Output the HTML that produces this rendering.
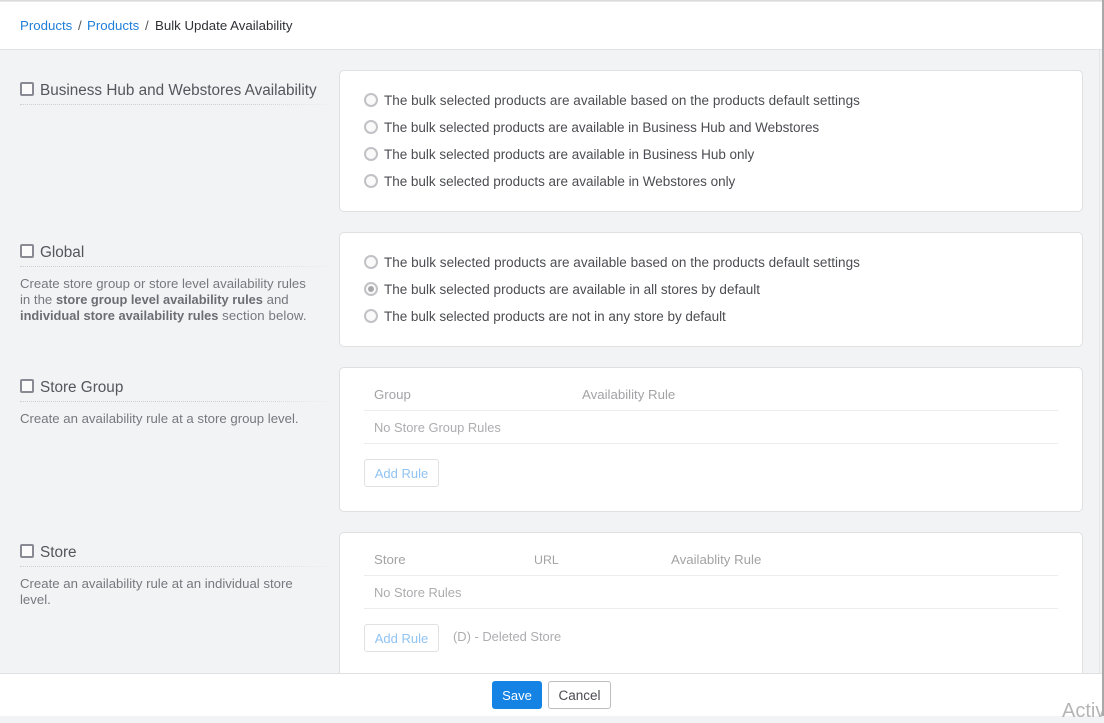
<!DOCTYPE html>
<html><head><meta charset="utf-8">
<style>
html,body{margin:0;padding:0;width:1104px;height:716px;overflow:hidden;background:#f2f3f5;font-family:"Liberation Sans",Arial,sans-serif;}
.t{position:absolute;white-space:nowrap;font-size:13.25px;line-height:18px;}
.b{position:absolute;box-sizing:border-box;}
.card{position:absolute;box-sizing:border-box;left:339px;width:744px;background:#fff;border:1px solid #dfe0e2;border-radius:5px;}
.cb{position:absolute;box-sizing:border-box;left:20px;width:14px;height:14px;border:2px solid #8a8a94;border-radius:2px;background:#fbfbfc;}
.h{position:absolute;left:40px;font-size:15.3px;line-height:20px;color:#55565c;white-space:nowrap;}
.dot{position:absolute;left:20px;width:318px;height:0;border-top:1px dotted #cfd0d3;-webkit-mask-image:linear-gradient(to right,#000 75%,transparent);mask-image:linear-gradient(to right,#000 75%,transparent);}
.d{position:absolute;left:20px;font-size:13.2px;line-height:16px;color:#77787e;white-space:nowrap;}
.d b{font-weight:bold;font-size:12.85px;color:#6c6d73;}
.r{position:absolute;box-sizing:border-box;left:364px;width:14px;height:14px;border:2px solid #c2c2c6;border-radius:50%;background:#fafafa;}
.l{position:absolute;left:384px;font-size:13.5px;letter-spacing:.03px;line-height:18px;color:#4c4d52;white-space:nowrap;}
.th{position:absolute;font-size:13.25px;line-height:18px;color:#a3a3a6;white-space:nowrap;}
.td{position:absolute;font-size:12.9px;line-height:18px;color:#adadb0;white-space:nowrap;}
.line{position:absolute;left:364px;width:694px;height:1px;background:#eceded;}
.add{position:absolute;box-sizing:border-box;left:364px;width:75px;height:28px;border:1px solid #e0e1e3;border-radius:3px;background:#fff;color:#90c3f2;font-size:13px;line-height:27px;text-align:center;}
</style></head><body>
<div class="b" style="left:0;top:0;width:1104px;height:50px;background:#fff;border-bottom:1px solid #e2e3e5;"></div>
<div class="b" style="left:0;top:0;width:1104px;height:2px;background:linear-gradient(#d4d4d4,#efefef);"></div>
<div class="t" style="left:20px;top:17px;color:#1f7fd8;">Products</div>
<div class="t" style="left:78px;top:17px;color:#555;">/</div>
<div class="t" style="left:87px;top:17px;color:#1f7fd8;">Products</div>
<div class="t" style="left:145px;top:17px;color:#555;">/</div>
<div class="t" style="left:155px;top:17px;color:#303136;">Bulk Update Availability</div>

<div class="cb" style="top:82px;"></div>
<div class="h" style="top:81px;">Business Hub and Webstores Availability</div>
<div class="dot" style="top:104px;"></div>

<div class="card" style="top:70px;height:142px;"></div>
<div class="r" style="top:93px;"></div><div class="l" style="top:92px;">The bulk selected products are available based on the products default settings</div>
<div class="r" style="top:120px;"></div><div class="l" style="top:119px;letter-spacing:-.03px;">The bulk selected products are available in Business Hub and Webstores</div>
<div class="r" style="top:147px;"></div><div class="l" style="top:146px;letter-spacing:-.02px;">The bulk selected products are available in Business Hub only</div>
<div class="r" style="top:174px;"></div><div class="l" style="top:173px;letter-spacing:-.02px;">The bulk selected products are available in Webstores only</div>

<div class="cb" style="top:244px;"></div>
<div class="h" style="top:243px;">Global</div>
<div class="dot" style="top:266px;"></div>
<div class="d" style="top:276px;">Create store group or store level availability rules</div>
<div class="d" style="top:292px;">in the <b>store group level availability rules</b> and</div>
<div class="d" style="top:308px;"><b>individual store availability rules</b> <span style="letter-spacing:.12px;">section below.</span></div>

<div class="card" style="top:232px;height:115px;"></div>
<div class="r" style="top:255px;"></div><div class="l" style="top:254px;">The bulk selected products are available based on the products default settings</div>
<div class="r" style="top:282px;"></div><div class="b" style="left:368px;top:286px;width:6px;height:6px;border-radius:50%;background:#a8a8ac;"></div><div class="l" style="top:281px;letter-spacing:0;">The bulk selected products are available in all stores by default</div>
<div class="r" style="top:309px;"></div><div class="l" style="top:308px;letter-spacing:-.02px;">The bulk selected products are not in any store by default</div>

<div class="cb" style="top:379px;"></div>
<div class="h" style="top:378px;">Store Group</div>
<div class="dot" style="top:401px;"></div>
<div class="d" style="top:411px;">Create an availability rule at a store group level.</div>

<div class="card" style="top:367px;height:145px;"></div>
<div class="th" style="left:374px;top:386px;">Group</div>
<div class="th" style="left:582px;top:386px;">Availability Rule</div>
<div class="line" style="top:410px;"></div>
<div class="td" style="left:374px;top:419px;">No Store Group Rules</div>
<div class="line" style="top:443px;"></div>
<div class="add" style="top:459px;">Add Rule</div>

<div class="cb" style="top:544px;"></div>
<div class="h" style="top:543px;">Store</div>
<div class="dot" style="top:566px;"></div>
<div class="d" style="top:576px;">Create an availability rule at an individual store</div>
<div class="d" style="top:592px;">level.</div>

<div class="card" style="top:532px;height:170px;"></div>
<div class="th" style="left:374px;top:551px;">Store</div>
<div class="th" style="left:534px;top:551px;font-size:12.4px;">URL</div>
<div class="th" style="left:671px;top:551px;">Availablity Rule</div>
<div class="line" style="top:575px;"></div>
<div class="td" style="left:374px;top:584px;">No Store Rules</div>
<div class="line" style="top:608px;"></div>
<div class="add" style="top:624px;">Add Rule</div>
<div class="td" style="left:453px;top:628px;">(D) - Deleted Store</div>

<div class="b" style="left:1099px;top:50px;width:1px;height:623px;background:#e6e7e9;"></div>
<div class="b" style="left:0;top:673px;width:1104px;height:43px;background:#fff;border-top:1px solid #dfe0e2;"></div>
<div class="b" style="left:492px;top:681px;width:50px;height:28px;background:#1583e4;border-radius:3px;color:#fff;font-size:13px;line-height:29px;text-align:center;">Save</div>
<div class="b" style="left:548px;top:681px;width:63px;height:28px;background:#fff;border:1px solid #bdbdbf;border-radius:3px;color:#4a4b50;font-size:13.5px;line-height:27px;text-align:center;">Cancel</div>
<div class="t" style="left:1062px;top:699px;font-size:20px;line-height:24px;color:#b5b5b5;">Activ</div>
<div class="b" style="left:1102px;top:0;width:2px;height:716px;background:#a9a9a9;"></div>
</body></html>
